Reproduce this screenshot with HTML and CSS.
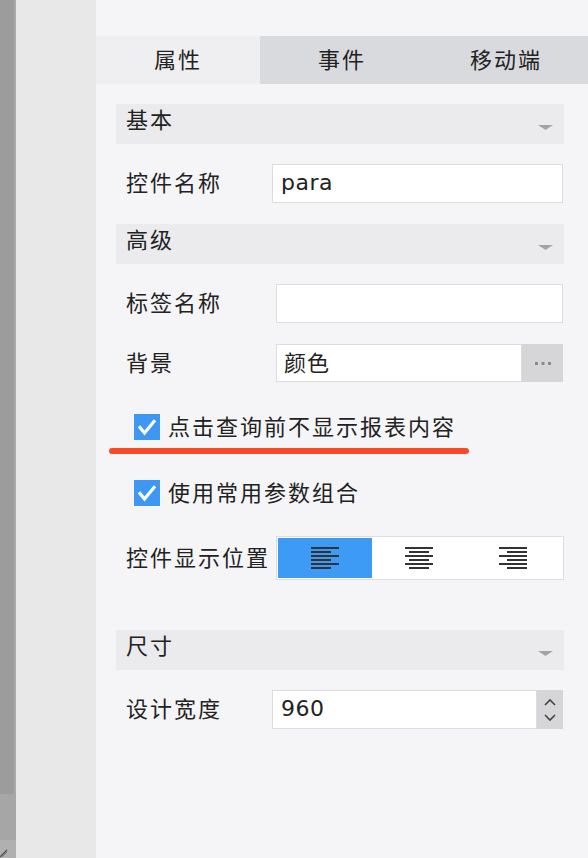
FILE: index.html
```html
<!DOCTYPE html>
<html lang="zh">
<head>
<meta charset="utf-8">
<title>属性面板</title>
<link rel="stylesheet" href="styles.css">
</head>
<body>
<div class="app">
  <div class="strip">
    <div class="strip-top"><div class="strip-dark"></div><div class="strip-edge"></div></div>
    <div class="strip-mid"></div>
    <div class="strip-bottom">
      <svg width="16" height="18" viewBox="0 0 16 18"><path d="M0 17 L7 10" stroke="#555" stroke-width="1.5"/><path d="M2 17 L7 12" stroke="#777" stroke-width="1"/></svg>
    </div>
  </div>
  <div class="gutter"></div>
  <div class="panel">
    <div class="tabs">
      <div class="tab active">属性</div>
      <div class="tab">事件</div>
      <div class="tab">移动端</div>
    </div>
    <div class="content">
      <div class="section-head head-first"><span class="head-title">基本</span><svg class="caret" width="15" height="5" viewBox="0 0 15 5"><polygon points="0,0 15,0 7.5,5" fill="#a3a3a6"/></svg></div>
      <div class="row row-a">
        <span class="label">控件名称</span>
        <div class="input latin">para</div>
      </div>
      <div class="section-head"><span class="head-title">高级</span><svg class="caret" width="15" height="5" viewBox="0 0 15 5"><polygon points="0,0 15,0 7.5,5" fill="#a3a3a6"/></svg></div>
      <div class="row row-b">
        <span class="label">标签名称</span>
        <div class="input"></div>
      </div>
      <div class="row row-b row-c">
        <span class="label">背景</span>
        <div class="input-group">
          <div class="input">颜色</div>
          <div class="more-btn"><svg width="20" height="4" viewBox="0 0 20 4"><rect x="2" y="1" width="3" height="3" fill="#8a8a8d"/><rect x="8.5" y="1" width="3" height="3" fill="#8a8a8d"/><rect x="15" y="1" width="3" height="3" fill="#8a8a8d"/></svg></div>
        </div>
      </div>
      <div class="check-row check-first">
        <span class="checkbox"><svg width="26" height="26" viewBox="0 0 26 26"><polyline points="6,13.5 10.5,19 20,7.5" fill="none" stroke="#fff" stroke-width="3.2" stroke-linecap="square"/></svg></span>
        <span class="check-text">点击查询前不显示报表内容</span>
      </div>
      <div class="red-mark"></div>
      <div class="check-row check-second">
        <span class="checkbox"><svg width="26" height="26" viewBox="0 0 26 26"><polyline points="6,13.5 10.5,19 20,7.5" fill="none" stroke="#fff" stroke-width="3.2" stroke-linecap="square"/></svg></span>
        <span class="check-text">使用常用参数组合</span>
      </div>
      <div class="row row-b row-align">
        <span class="label">控件显示位置</span>
        <div class="seg-group">
          <div class="seg selected">
            <svg width="28" height="22" viewBox="0 0 28 22"><g fill="#333"><rect x="0" y="0" width="28" height="2"/><rect x="0" y="4" width="20" height="2"/><rect x="0" y="8" width="28" height="2"/><rect x="0" y="12" width="20" height="2"/><rect x="0" y="16" width="28" height="2"/><rect x="0" y="20" width="20" height="2"/></g></svg>
          </div>
          <div class="seg">
            <svg width="28" height="22" viewBox="0 0 28 22"><g fill="#333"><rect x="0" y="0" width="28" height="2"/><rect x="4" y="4" width="20" height="2"/><rect x="0" y="8" width="28" height="2"/><rect x="4" y="12" width="20" height="2"/><rect x="0" y="16" width="28" height="2"/><rect x="4" y="20" width="20" height="2"/></g></svg>
          </div>
          <div class="seg">
            <svg width="28" height="22" viewBox="0 0 28 22"><g fill="#333"><rect x="0" y="0" width="28" height="2"/><rect x="8" y="4" width="20" height="2"/><rect x="0" y="8" width="28" height="2"/><rect x="8" y="12" width="20" height="2"/><rect x="0" y="16" width="28" height="2"/><rect x="8" y="20" width="20" height="2"/></g></svg>
          </div>
        </div>
      </div>
      <div class="section-head head-size"><span class="head-title">尺寸</span><svg class="caret" width="15" height="5" viewBox="0 0 15 5"><polygon points="0,0 15,0 7.5,5" fill="#a3a3a6"/></svg></div>
      <div class="row row-a">
        <span class="label">设计宽度</span>
        <div class="input-group">
          <div class="input latin">960</div>
          <div class="spinner">
            <svg width="14" height="8" viewBox="0 0 14 8"><polyline points="2,7 7,2 12,7" fill="none" stroke="#444" stroke-width="1.6"/></svg>
            <svg width="14" height="8" viewBox="0 0 14 8"><polyline points="2,1 7,6 12,1" fill="none" stroke="#444" stroke-width="1.6"/></svg>
          </div>
        </div>
      </div>
    </div>
  </div>
</div>
</body>
</html>
```

FILE: styles.css
```css
* { box-sizing: border-box; }
html, body { margin: 0; padding: 0; }
body {
  width: 588px;
  height: 858px;
  overflow: hidden;
  background: #f5f5f7;
  font-family: "Noto Sans CJK SC", "Noto Sans", sans-serif;
  color: #222;
}
.app { display: flex; height: 858px; }

.strip { width: 16px; display: flex; flex-direction: column; }
.strip-top { flex: 1; display: flex; }
.strip-dark { width: 14px; background: #9c9c9c; }
.strip-edge { width: 2px; background: #a9a9a9; }
.strip-mid { height: 46px; background: #a6a6a6; }
.strip-bottom { height: 18px; background: #b0b0b0; display: flex; align-items: flex-end; }
.strip-bottom svg { display: block; }

.gutter { width: 80px; background: #e8e8e8; }

.panel { flex: 1; background: #f5f5f7; padding-top: 36px; }

.tabs { display: flex; height: 48px; background: #d9dadd; }
.tab {
  flex: 1;
  display: flex;
  align-items: center;
  justify-content: center;
  font-size: 22px;
  line-height: 30px;
  letter-spacing: 2px;
  padding-bottom: 5px;
  color: #222;
}
.tab.active { background: #efeff1; }

.content { padding: 0 24px 0 20px; display: flex; flex-direction: column; }

.section-head {
  height: 40px;
  margin-top: 21px;
  background: #ebebed;
  display: flex;
  justify-content: space-between;
  padding: 0 11px 0 10px;
}
.section-head.head-first { margin-top: 20px; }
.section-head.head-size { margin-top: 50px; }
.head-title { font-size: 22px; line-height: 29px; letter-spacing: 2px; }
.caret { align-self: flex-end; margin-bottom: 14px; }

.row {
  display: flex;
  align-items: center;
  height: 39px;
  margin-top: 20px;
}
.label {
  font-size: 22px;
  line-height: 30px;
  letter-spacing: 2px;
  padding-left: 10px;
  padding-bottom: 5px;
  flex: 0 0 156px;
  white-space: nowrap;
}
.row-b .label { flex-basis: 160px; }
.row-c { margin-top: 21px; height: 38px; }

.input {
  flex: 1;
  height: 100%;
  background: #fff;
  border: 1px solid #dcdcde;
  display: flex;
  align-items: center;
  padding-left: 7px;
  padding-bottom: 4px;
  font-size: 22px;
  line-height: 30px;
  letter-spacing: 1px;
}
.row-a > .input, .row-b > .input { margin-right: 1px; }
.input.latin { font-family: "DejaVu Sans", sans-serif; letter-spacing: 0.5px; padding-left: 8px; padding-bottom: 1px; }

.input-group { flex: 1; display: flex; height: 100%; }
.more-btn {
  width: 41px;
  background: #d6d6d9;
  display: flex;
  align-items: center;
  justify-content: center;
  margin-right: 1px;
}
.spinner {
  width: 26px;
  background: #d6d6d9;
  display: flex;
  flex-direction: column;
  align-items: center;
  justify-content: center;
  gap: 8px;
  margin-right: 1px;
}
.spinner svg { display: block; }

.check-row {
  display: flex;
  align-items: center;
  height: 26px;
  padding-left: 18px;
}
.check-first { margin-top: 32px; }
.check-second { margin-top: 26px; }
.checkbox {
  width: 26px;
  height: 26px;
  background: #3d97f3;
  display: block;
  flex: 0 0 26px;
}
.checkbox svg { display: block; }
.check-text {
  font-size: 22px;
  line-height: 30px;
  letter-spacing: 2px;
  margin-left: 8px;
  padding-bottom: 5px;
  white-space: nowrap;
}

.red-mark {
  height: 6px;
  width: 360px;
  margin-left: -7px;
  margin-top: 8px;
  background: #f84a26;
  border-radius: 3px;
}

.row-align { height: 44px; margin-top: 30px; }
.seg-group {
  flex: 1;
  height: 100%;
  display: flex;
  background: #fff;
  border: 1px solid #dedee0;
  padding: 1px 3px 1px 1px;
}
.seg {
  flex: 1;
  display: flex;
  align-items: center;
  justify-content: center;
  background: #fff;
}
.seg svg { display: block; }
.seg.selected { background: #3d9bf5; }
```
